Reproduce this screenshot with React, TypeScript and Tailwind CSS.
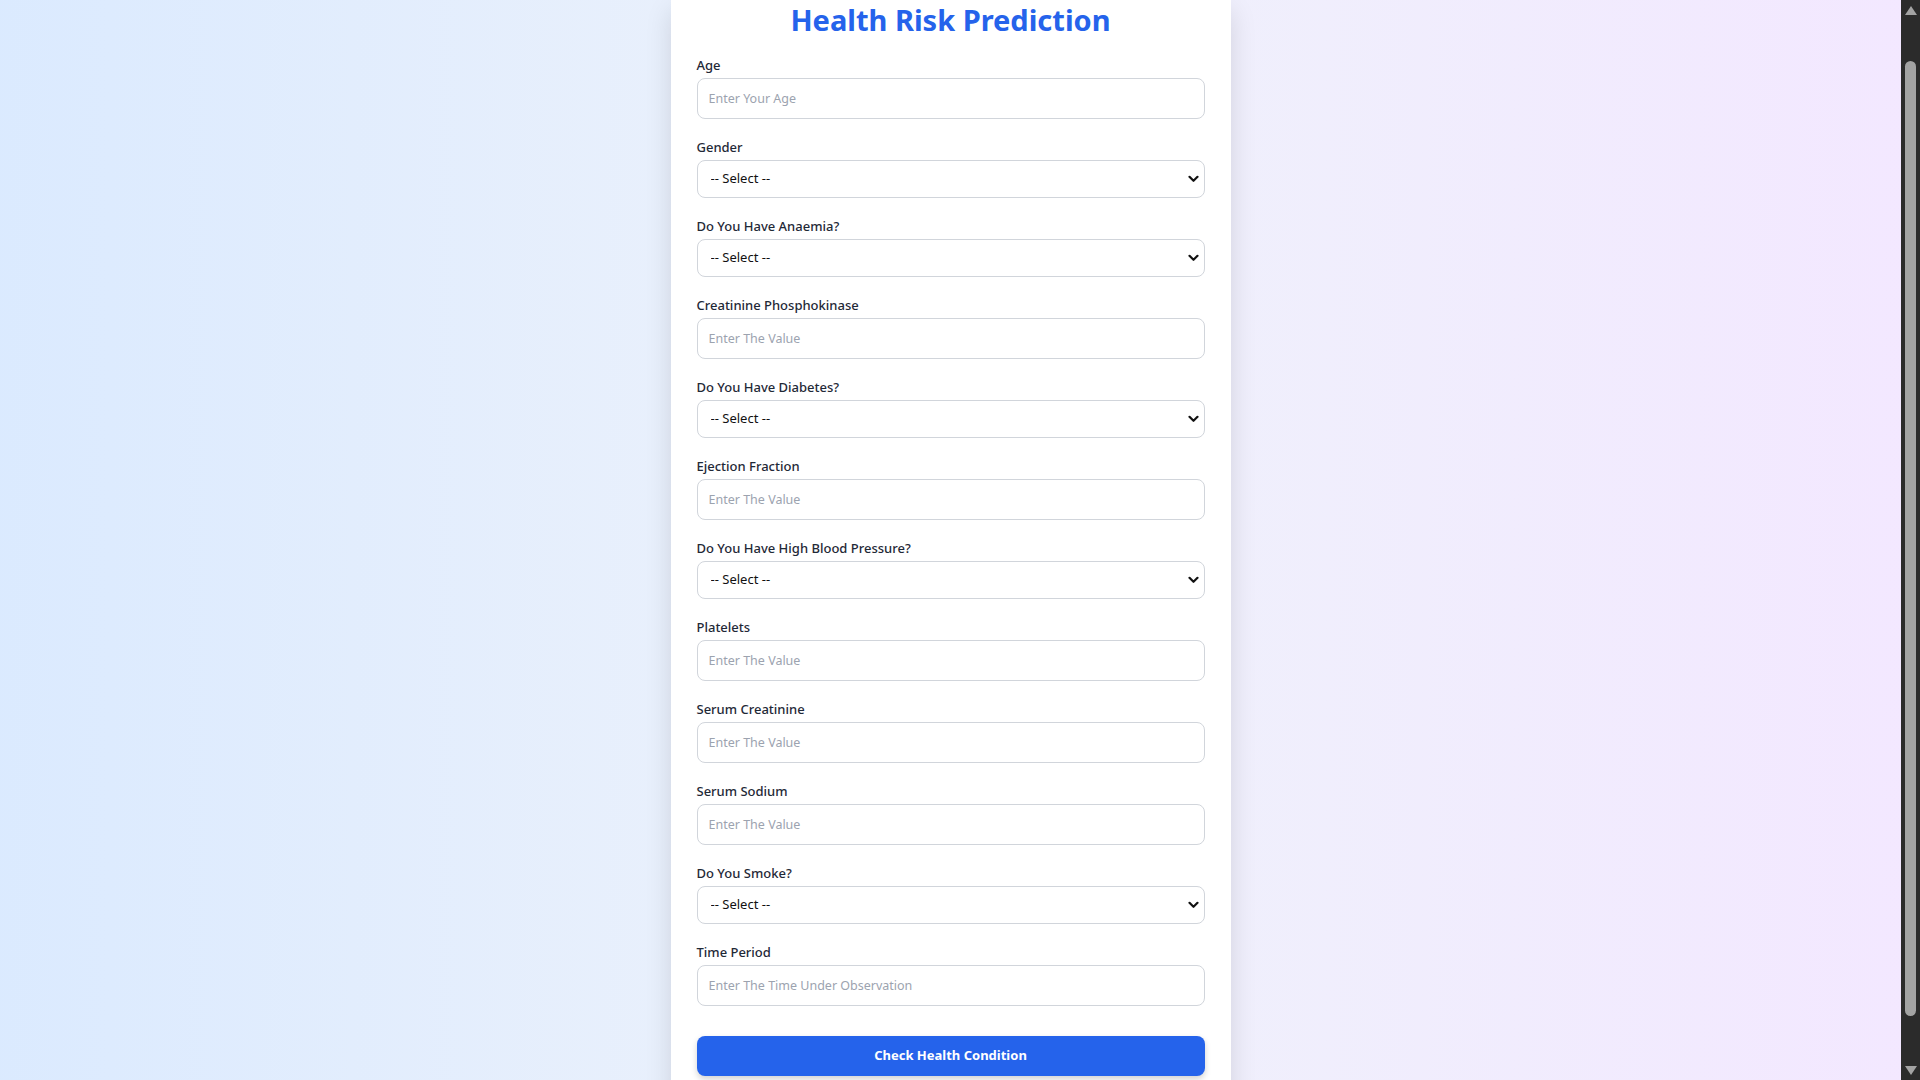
import React from "react";

type Field = { label: string; kind: "input" | "select"; placeholder?: string };

const fields: Field[] = [
  { label: "Age", kind: "input", placeholder: "Enter Your Age" },
  { label: "Gender", kind: "select" },
  { label: "Do You Have Anaemia?", kind: "select" },
  { label: "Creatinine Phosphokinase", kind: "input", placeholder: "Enter The Value" },
  { label: "Do You Have Diabetes?", kind: "select" },
  { label: "Ejection Fraction", kind: "input", placeholder: "Enter The Value" },
  { label: "Do You Have High Blood Pressure?", kind: "select" },
  { label: "Platelets", kind: "input", placeholder: "Enter The Value" },
  { label: "Serum Creatinine", kind: "input", placeholder: "Enter The Value" },
  { label: "Serum Sodium", kind: "input", placeholder: "Enter The Value" },
  { label: "Do You Smoke?", kind: "select" },
  { label: "Time Period", kind: "input", placeholder: "Enter The Time Under Observation" },
];

function Chevron() {
  return (
    <svg width="11" height="8" viewBox="0 0 11 8" className="pointer-events-none absolute right-[6px] top-1/2 -translate-y-1/2">
      <path d="M1.5 1.8 L5.5 5.8 L9.5 1.8" fill="none" stroke="#111" strokeWidth="2.2" strokeLinecap="round" strokeLinejoin="round" />
    </svg>
  );
}

export default function App() {
  return (
    <div className="flex h-screen w-full overflow-hidden" style={{ fontFamily: '"Noto Sans", "Open Sans", sans-serif' }}>
      <div className="flex-1 bg-gradient-to-r from-blue-100 via-[#eef2fb] to-purple-100">
        <div className="mx-auto w-[560px] bg-white px-[26px] shadow-[0_10px_25px_rgba(0,0,0,0.12)]">
          <h1 className="text-center text-[29px] font-bold leading-[40px] text-[#2563eb]">Health Risk Prediction</h1>
          <form className="mt-[15px]" onSubmit={(e) => e.preventDefault()}>
            {fields.map((f) => (
              <div key={f.label} className="mb-[18px]">
                <label className="mb-[3px] block text-[13px] font-medium leading-5 text-[#1f2937]">{f.label}</label>
                {f.kind === "input" ? (
                  <input
                    type="text"
                    placeholder={f.placeholder}
                    className="block h-[41px] w-full rounded-lg border border-[#d1d5db] bg-white px-[11px] text-[12.5px] text-[#111] outline-none placeholder:text-[#9ca3af]"
                  />
                ) : (
                  <div className="relative">
                    <select
                      defaultValue=""
                      className="block h-[38px] w-full appearance-none rounded-lg border border-[#d1d5db] bg-white px-[13px] text-[13px] text-[#111] outline-none"
                    >
                      <option value="">-- Select --</option>
                      <option value="1">Yes</option>
                      <option value="0">No</option>
                    </select>
                    <Chevron />
                  </div>
                )}
              </div>
            ))}
            <button
              type="submit"
              className="mt-[30px] block h-[40px] w-full rounded-lg bg-[#2563eb] text-[13px] font-bold text-white shadow-[0_3px_6px_rgba(0,0,0,0.18)]"
            >
              Check Health Condition
            </button>
            <div className="h-[30px]" />
          </form>
        </div>
      </div>
      <div className="flex w-[19px] flex-col items-center bg-[#2b2b2b]">
        <div className="mt-[6px] h-0 w-0 border-x-[6px] border-b-[9px] border-x-transparent border-b-[#a3a3a3]" />
        <div className="mt-[46px] h-[955px] w-[11px] rounded-full bg-[#a3a3a3]" />
        <div className="mt-auto mb-[5px] h-0 w-0 border-x-[6px] border-t-[9px] border-x-transparent border-t-[#a3a3a3]" />
      </div>
    </div>
  );
}
